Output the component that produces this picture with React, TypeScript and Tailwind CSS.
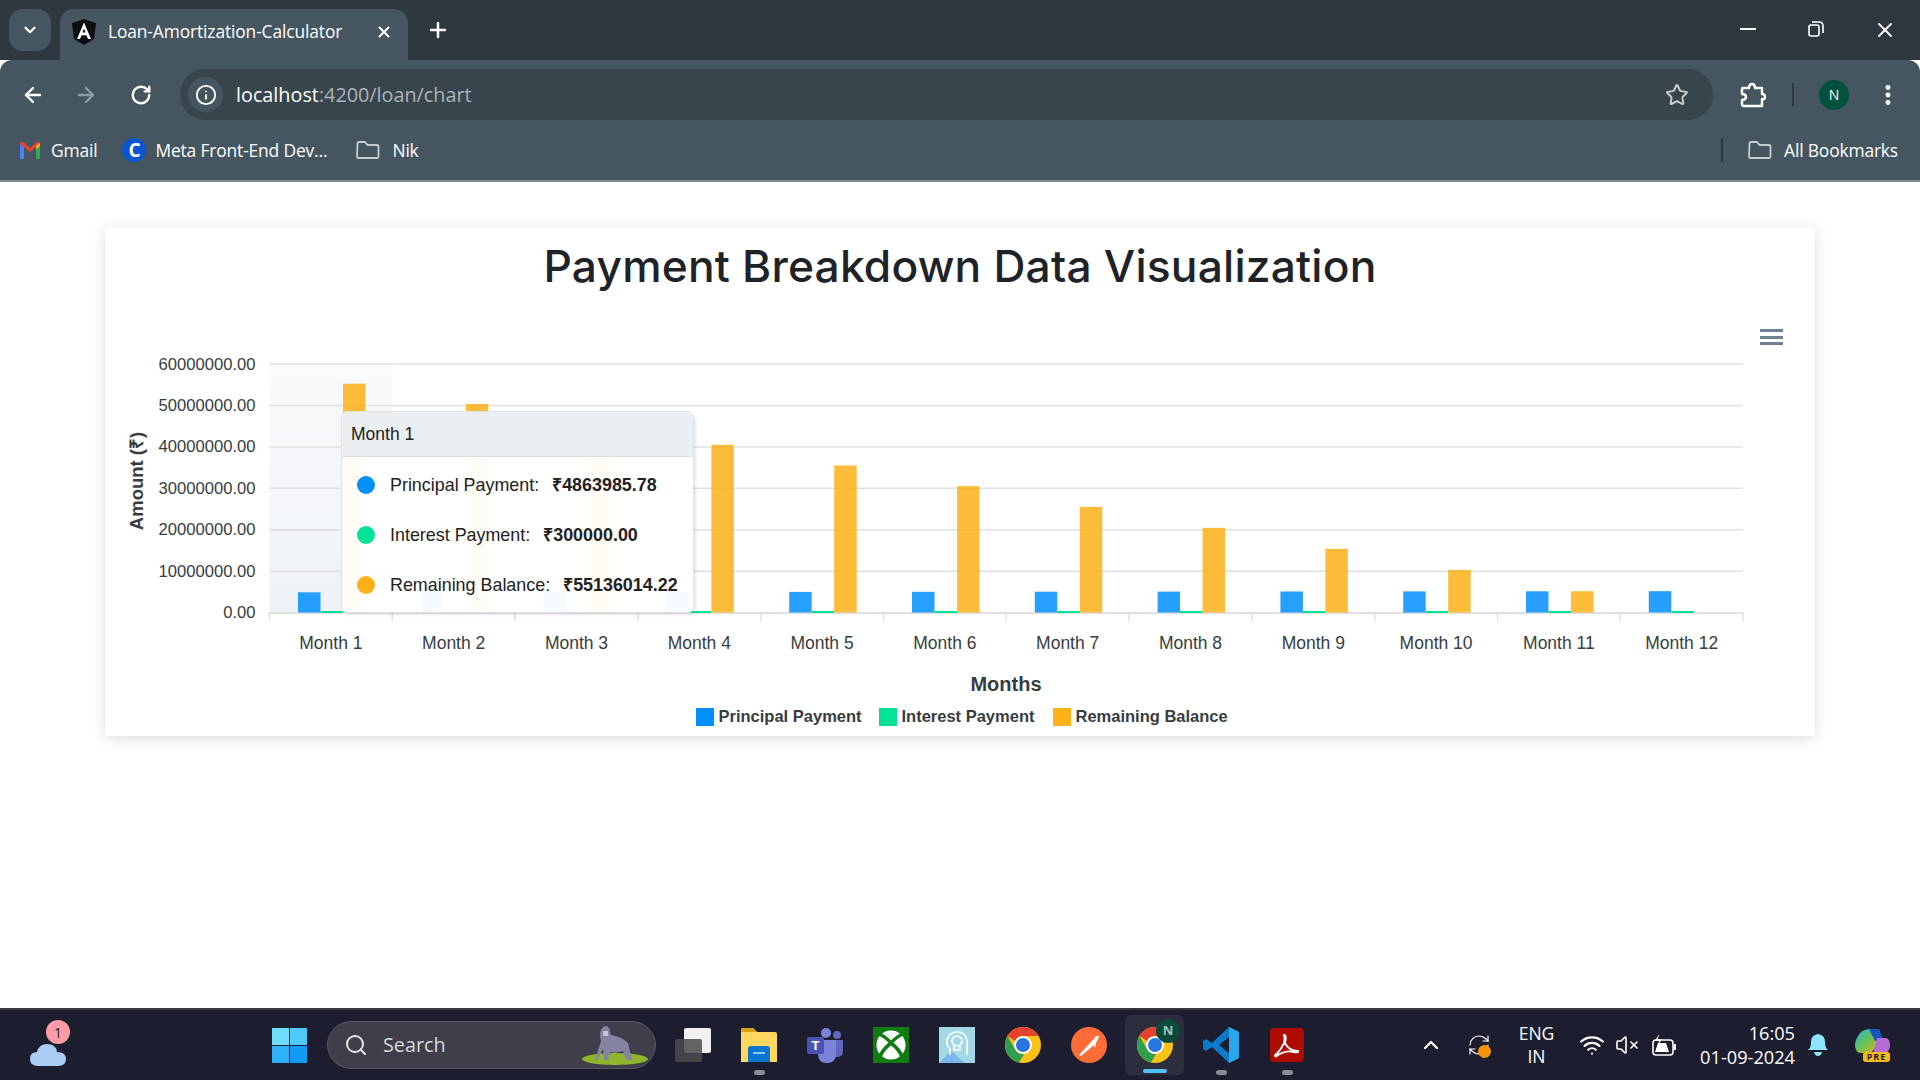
import {
  ArrowLeft,
  ArrowRight,
  ChevronDown,
  ChevronUp,
  EllipsisVertical,
  Info,
  Plus,
  RefreshCw,
  RotateCw,
  Search,
  Star,
  VolumeX,
  Wifi,
  X,
} from "lucide-react";

const months = Array.from({ length: 12 }, (_, i) => `Month ${i + 1}`);
const yLabels = ["60000000.00", "50000000.00", "40000000.00", "30000000.00", "20000000.00", "10000000.00", "0.00"];

// amortization schedule: 60M over 12 months at 0.5% a month
const schedule = (() => {
  let balance = 60000000;
  return months.map(() => {
    const interest = balance * 0.005;
    const principal = 5163985.78 - interest;
    balance = Math.max(balance - principal, 0);
    return { principal, interest, balance };
  });
})();

const FolderIcon = () => (
  <svg width="24" height="24" viewBox="0 0 24 24" fill="none" stroke="#c7ccd0" strokeWidth="1.8">
    <path d="M1.500 5.500q0-1.500 1.500-1.500h6l2.500 3h9.500q1.500 0 1.500 1.500v10q0 1.500-1.500 1.500h-18.500q-1.500 0-1.500-1.500z" />
  </svg>
);

const ChartArea = () => {
  const left = 269.5;
  const cell = 122.8;
  const base = 612.5;
  const scale = 249 / 60000000;
  return (
    <svg width="1710" height="436" viewBox="105 300 1710 436" fontFamily="'Liberation Sans', sans-serif" fill="#373d3f">
      <defs>
        <linearGradient id="cross" x1="0" y1="0" x2="0" y2="1">
          <stop offset="0" stopColor="#f9fafc" />
          <stop offset="1" stopColor="#eef2f7" />
        </linearGradient>
      </defs>
      <rect x={left} y="364" width={cell} height="248" fill="url(#cross)" />
      {yLabels.map((label, i) => {
        const y = 364 + i * 41.45;
        return (
          <g key={label}>
            {i < 6 && <line x1={left} x2="1743" y1={y} y2={y} stroke="#e0e0e0" strokeWidth="1.5" />}
            <text x="255.500" y={y + 5.5} textAnchor="end" fontSize="16.600">
              {label}
            </text>
          </g>
        );
      })}
      <line x1={left} x2="1743" y1={base + 0.5} y2={base + 0.5} stroke="#e0e0e0" strokeWidth="2" />
      {schedule.map((row, i) => {
        const x = left + i * cell + 28.5;
        return (
          <g key={i}>
            <rect x={x} y={base - row.principal * scale} width="22.500" height={row.principal * scale} fill="#008ffb" fillOpacity="0.85" />
            <rect x={x + 22.5} y={base - 1.5} width="22.500" height="2" fill="#00e396" />
            <rect x={x + 45} y={base - row.balance * scale} width="22.500" height={row.balance * scale} fill="#feb019" fillOpacity="0.85" />
            <text x={left + i * cell + cell / 2} y="648.500" textAnchor="middle" fontSize="17.500">
              {months[i]}
            </text>
          </g>
        );
      })}
      {Array.from({ length: 13 }, (_, i) => (
        <line key={i} x1={left + i * cell} x2={left + i * cell} y1={base} y2={base + 9} stroke="#e0e0e0" strokeWidth="1.5" />
      ))}
      <text transform="translate(143 481) rotate(-90)" textAnchor="middle" fontSize="18.500" fontWeight="700">
        Amount (₹)
      </text>
      <text x="1006" y="691" textAnchor="middle" fontSize="20" fontWeight="700">
        Months
      </text>
      <rect x="696" y="708" width="18" height="18" fill="#008ffb" />
      <text x="718.500" y="722" fontSize="16.500" fontWeight="700">
        Principal Payment
      </text>
      <rect x="879" y="708" width="18" height="18" fill="#00e396" />
      <text x="901.500" y="722" fontSize="16.500" fontWeight="700">
        Interest Payment
      </text>
      <rect x="1053" y="708" width="18" height="18" fill="#feb019" />
      <text x="1075.500" y="722" fontSize="16.500" fontWeight="700">
        Remaining Balance
      </text>
      <g fill="#6e8192">
        <rect x="1760" y="329" width="23" height="3" />
        <rect x="1760" y="336" width="23" height="3" />
        <rect x="1760" y="342" width="23" height="3" />
      </g>
    </svg>
  );
};

const tooltipRows = [
  { label: "Principal Payment:", value: "₹4863985.78", color: "bg-[#008ffb]" },
  { label: "Interest Payment:", value: "₹300000.00", color: "bg-[#00e396]" },
  { label: "Remaining Balance:", value: "₹55136014.22", color: "bg-[#feb019]" },
];

const Tooltip = () => (
  <div className="absolute left-[236px] top-[111px] h-[202px] w-[353px] overflow-hidden rounded-[6px] border border-[#e3e3e3] bg-white/95 font-['Liberation_Sans',sans-serif] text-[17.9px] text-[#222] shadow-[2px_2px_6px_-4px_#999]">
    <div className="flex h-[45px] items-center border-b border-[#ddd] bg-[#eceff1] pl-[9px] text-[17.5px]">Month 1</div>
    <div className="flex flex-col gap-[32px] pl-[15px] pt-[19px]">
      {tooltipRows.map((row) => (
        <div key={row.label} className="flex h-[18px] items-center">
          <span className={`mr-[15px] h-[18px] w-[18px] rounded-full ${row.color}`} />
          <span className="mr-[13px]">{row.label}</span>
          <span className="font-bold">{row.value}</span>
        </div>
      ))}
    </div>
  </div>
);

const BrowserChrome = () => (
  <div className="font-['Open_Sans',sans-serif] text-white">
    {/* tab strip */}
    <div className="flex h-[60px] bg-[#2e383e] pl-[9px]">
      <div className="mt-[9px] flex h-[42px] w-[42px] items-center justify-center rounded-[14px] bg-[#455660]">
        <ChevronDown size={18} strokeWidth={3} />
      </div>
      <div className="ml-[9px] mt-[9px] flex h-[51px] w-[348px] items-center rounded-t-[14px] bg-[#455660] pb-[6px] pl-[12px]">
        <svg width="24" height="26" viewBox="0 0 24 26">
          <path d="M12 0 24 4.300 22 20 12 26 2 20 0 4.300z" fill="#0d0e12" />
          <path d="M12 3.500 5 20h3l1.500-3.800h5L16 20h3zM10.500 13.500 12 9.500l1.500 4z" fill="#fff" />
        </svg>
        <span className="ml-[12px] w-[267px] whitespace-nowrap text-[17.35px] tracking-[-0.1px]">Loan-Amortization-Calculator</span>
        <X size={18} strokeWidth={2.5} />
      </div>
      <Plus size={24} strokeWidth={2.5} className="ml-[18px] mt-[18px]" />
      <div className="ml-auto flex pt-[18px]">
        <div className="mt-[10px] h-[2px] w-[16px] bg-white" />
        <svg width="18" height="18" viewBox="0 0 18 18" fill="none" stroke="#fff" strokeWidth="1.600" className="ml-[51px] mt-[2px]">
          <rect x="2" y="5" width="10" height="11" rx="2" />
          <path d="M5 2h7q4 0 4 4v7" />
        </svg>
        <X size={24} strokeWidth={1.8} className="ml-[48px] mr-[23px]" />
      </div>
    </div>
    {/* address bar */}
    <div className="h-[122px] rounded-t-[12px] border-b-2 border-[#7f8a91] bg-[#455660]">
      <div className="flex h-[60px] items-center pl-[21px] pt-[9px]">
        <ArrowLeft size={24} strokeWidth={2.4} />
        <ArrowRight size={24} strokeWidth={2.4} className="ml-[29px] text-[#8f9ba3]" />
        <RotateCw size={22} strokeWidth={2.6} className="ml-[32px]" />
        <div className="ml-[28px] flex h-[51px] w-[1533px] items-center rounded-full bg-[#39454c] pl-[8px] pr-[24px]">
          <div className="flex h-[35px] w-[35px] items-center justify-center rounded-full bg-[#455660]">
            <Info size={22} strokeWidth={2} />
          </div>
          <span className="ml-[13px] text-[19.8px]">
            localhost<span className="text-[#aab4ba]">:4200/loan/chart</span>
          </span>
          <Star size={24} strokeWidth={2} className="ml-auto text-[#c5cacd]" />
        </div>
        <svg width="26" height="28" viewBox="0 0 26 28" fill="none" stroke="#fff" strokeWidth="2.400" strokeLinejoin="round" className="ml-[27px]">
          <path d="M3 7h6q0-4 3-4t3 4h7v6q3 0 3 3t-3 2v7H4q-2 0-2-2v-4q4 0 4-3t-4-3V9q0-2 1-2z" />
        </svg>
        <div className="ml-[26px] h-[23px] w-[2px] bg-[#2e383e]" />
        <div className="ml-[25px] flex h-[30px] w-[30px] items-center justify-center rounded-full bg-[#00513f] text-[14px]">N</div>
        <EllipsisVertical size={26} strokeWidth={2.6} className="ml-[26px]" />
      </div>
      <div className="flex h-[60px] items-center pl-[19px] text-[17.4px] tracking-[-0.15px]">
        <svg width="22" height="18" viewBox="0 0 22 18">
          <path d="M1 18V3l4 2v13z" fill="#4285f4" />
          <path d="M17 18V5l4-2v15z" fill="#34a853" />
          <path d="M1 3q0-3 3-2l7 6 7-6q3-1 3 2l-4 3-6 5-6-5z" fill="#ea4335" />
          <path d="M17 5l4-3v3l-4 3z" fill="#fbbc04" />
        </svg>
        <span className="ml-[10px]">Gmail</span>
        <div className="ml-[25px] flex h-[24px] w-[24px] items-center justify-center rounded-full bg-[#0a56d2] text-[19px] font-bold">C</div>
        <span className="ml-[9px] w-[176px] whitespace-nowrap">Meta Front-End Dev...</span>
        <div className="ml-[25px]">
          <FolderIcon />
        </div>
        <span className="ml-[12px]">Nik</span>
        <div className="ml-auto h-[24px] w-[2px] bg-[#2e383e]" />
        <div className="ml-[25px]">
          <FolderIcon />
        </div>
        <span className="ml-[12px] mr-[22px]">All Bookmarks</span>
      </div>
    </div>
  </div>
);

const dot = "h-[5px] w-[11px] rounded-full bg-[#8a8c94]";

const ChromeLogo = () => (
  <svg width="36" height="36" viewBox="0 0 36 36">
    <circle cx="18" cy="18" r="18" fill="#fbc116" />
    <path d="M18 0a18 18 0 0 1 15.600 9H18a9 9 0 0 0-8 5L2.500 9A18 18 0 0 1 18 0z" fill="#e5432f" />
    <path d="M2.500 9 10 22a9 9 0 0 0 9 5l-5 8.500A18 18 0 0 1 2.500 9z" fill="#2f9e4f" />
    <circle cx="18" cy="18" r="9" fill="#fff" />
    <circle cx="18" cy="18" r="7" fill="#2a74e0" />
  </svg>
);

const TaskIcon = ({ children, indicator }: { children: React.ReactNode; indicator?: boolean }) => (
  <div className="relative flex h-[36px] w-[36px] items-center justify-center">
    {children}
    {indicator && <div className={`absolute left-[13px] top-[43px] ${dot}`} />}
  </div>
);

const Taskbar = () => (
  <div className="flex h-[72px] items-center border-t-2 border-[#35363f] bg-[#1c1e2f] font-['Open_Sans',sans-serif] text-white">
    {/* weather */}
    <div className="relative ml-[30px] h-[36px] w-[36px]">
      <svg width="36" height="26" viewBox="0 0 36 26" className="absolute top-[13px]">
        <path d="M8 26q-8 0-8-7t7-7q2-8 10-8 9 0 10 8 9 0 9 7t-8 7z" fill="#a9cdf4" />
      </svg>
      <div className="absolute left-[16px] top-[-7px] flex h-[24px] w-[24px] items-center justify-center rounded-full bg-[#ff9ca5] text-[14px] text-[#222]">1</div>
    </div>
    <svg width="35" height="35" viewBox="0 0 35 35" className="ml-[206px]">
      <rect width="17" height="17" fill="#6fdcfb" />
      <rect x="18" width="17" height="17" fill="#4fc8fa" />
      <rect y="18" width="17" height="17" fill="#2db0f7" />
      <rect x="18" y="18" width="17" height="17" fill="#129bf5" />
    </svg>
    <div className="ml-[20px] flex h-[48px] w-[329px] items-center rounded-full border border-[#565662] bg-[#3f3f4c] pl-[16px] pr-[6px]">
      <Search size={24} strokeWidth={2} className="text-[#e6e6e6]" />
      <span className="ml-[15px] text-[19.8px] text-[#d8d8dc]">Search</span>
      <svg width="67" height="40" viewBox="0 0 67 40" className="ml-auto">
        <ellipse cx="33" cy="34" rx="33" ry="6" fill="#8fb52c" />
        <path d="M13 35 19 16q-2-6 0-11 2-4 5-4 4 1 4 6l1 3q11 2 17 8l4 17h-6l-3-9q-7 3-13 1l-2 8h-4l-1-11-6 11z" fill="#8484a2" />
        <path d="M21 6h5v5h-5z" fill="#c2c2d2" />
      </svg>
    </div>
    <div className="ml-[19px] flex gap-[30px]">
      <TaskIcon>
        <svg width="36" height="34" viewBox="0 0 36 34">
          <rect x="9" width="27" height="25" rx="2" fill="#f1f1f1" />
          <rect y="11" width="27" height="23" rx="2" fill="#4a4a4c" fillOpacity="0.85" />
        </svg>
      </TaskIcon>
      <TaskIcon indicator>
        <svg width="36" height="34" viewBox="0 0 36 34">
          <path d="M0 2q0-2 2-2h10l4 4h18q2 0 2 2v28H0z" fill="#ffd75e" />
          <path d="M0 2q0-2 2-2h10l3 4H0z" fill="#d9a010" />
          <path d="M7 34V21q0-3 3-3h16q3 0 3 3v13z" fill="#0a76d0" />
          <rect x="12" y="24" width="12" height="2" fill="#8cc8f5" />
        </svg>
      </TaskIcon>
      <TaskIcon>
        <svg width="36" height="36" viewBox="0 0 36 36">
          <circle cx="19" cy="6" r="5" fill="#7b83d9" />
          <circle cx="30" cy="8" r="4" fill="#5f67bd" />
          <path d="M24 13h12v11q0 6-6 6t-6-6z" fill="#5f67bd" />
          <path d="M11 13h18v14q0 9-9 9t-9-9z" fill="#7b83d9" />
          <rect y="10" width="17" height="17" rx="2" fill="#4a52b5" />
          <text x="8.500" y="23" textAnchor="middle" fontSize="13" fontWeight="700" fill="#fff" fontFamily="'Liberation Sans', sans-serif">T</text>
        </svg>
      </TaskIcon>
      <TaskIcon>
        <svg width="36" height="36" viewBox="0 0 36 36" fill="none">
          <rect width="36" height="36" fill="#107c10" />
          <circle cx="18" cy="18" r="14.500" fill="#fff" />
          <path d="M6 7Q13 10 18 16 23 10 30 7M18 16Q9 23 7 30M18 16Q27 23 29 30" stroke="#107c10" strokeWidth="3.500" />
        </svg>
      </TaskIcon>
      <TaskIcon>
        <svg width="36" height="36" viewBox="0 0 36 36" fill="none">
          <rect width="36" height="36" fill="#a4d8e4" />
          <path d="M0 36 12 24l14 12z" fill="#7cb6ee" />
          <path d="M11 28v-6q-4-4-3-9 2-8 10-8 9 0 10 9v14" stroke="#fff" strokeWidth="1.600" />
          <circle cx="18" cy="14" r="5" stroke="#fff" strokeWidth="1.600" />
          <path d="M15 19v4h6v-4" stroke="#fff" strokeWidth="1.600" />
        </svg>
      </TaskIcon>
      <TaskIcon>
        <ChromeLogo />
      </TaskIcon>
      <TaskIcon>
        <svg width="36" height="36" viewBox="0 0 36 36">
          <circle cx="18" cy="18" r="18" fill="#ff6c37" />
          <path d="M8 28 20 15l3 3-13 11zM20 15l5-6q2-1 3 1l-3 6-1 5-1-3z" fill="#fff" />
        </svg>
      </TaskIcon>
    </div>
    <div className="relative ml-[18px] flex h-[60px] w-[59px] items-center justify-center rounded-[6px] bg-[#2c2e3e]">
      <ChromeLogo />
      <div className="absolute left-[31px] top-[4px] flex h-[24px] w-[24px] items-center justify-center rounded-full bg-[#084a3c] text-[13px] font-bold text-[#a5c5bb]">N</div>
      <div className="absolute left-[18px] top-[54px] h-[4px] w-[24px] rounded-full bg-[#4cc2ff]" />
    </div>
    <div className="ml-[19px] flex gap-[30px]">
      <TaskIcon indicator>
        <svg width="36" height="36" viewBox="0 0 36 36">
          <path d="M26 0 36 5v26l-10 5L9 20l-6 4-3-2v-8l3-2 6 4z" fill="#0b7ac7" />
          <path d="M26 0 36 5v26l-10 5z" fill="#28a8ea" />
          <path d="M26 10v16l-10-8z" fill="#1c1e2f" />
        </svg>
      </TaskIcon>
      <TaskIcon indicator>
        <svg width="34" height="34" viewBox="0 0 34 34" fill="none">
          <rect width="34" height="34" rx="4" fill="#ae0c00" />
          <path d="M5 27q4-2 9-12 1-5 0-8 3 0 1 8 4 8 13 8 1 2-5 1-6-2-15 3-3 3-3 0z" stroke="#fff" strokeWidth="1.800" />
        </svg>
      </TaskIcon>
    </div>
    {/* tray */}
    <ChevronUp size={24} strokeWidth={2.2} className="ml-[114px]" />
    <div className="relative ml-[24px] h-[24px] w-[24px]">
      <RefreshCw size={24} strokeWidth={1.2} />
      <div className="absolute left-[11px] top-[12px] h-[13px] w-[13px] rounded-full bg-[#f7950a]" />
    </div>
    <div className="ml-[27px] w-[37px] text-center text-[17.5px] leading-[23px]">
      ENG
      <br />
      IN
    </div>
    <Wifi size={26} strokeWidth={2} className="ml-[24px]" />
    <VolumeX size={24} strokeWidth={1.6} className="ml-[10px]" />
    <svg width="24" height="24" viewBox="0 0 24 24" fill="none" stroke="#fff" strokeWidth="1.600" className="ml-[13px]">
      <rect x="1" y="7" width="20" height="15" rx="3" />
      <rect x="22" y="11" width="2" height="6" fill="#fff" stroke="none" />
      <path d="M3 19 6 10h8l3 9z" fill="#fff" stroke="none" />
      <path d="M7 1 3 8h4l-1 4 4-6H6z" fill="#fff" stroke="none" />
    </svg>
    <div className="ml-[10px] w-[109px] whitespace-nowrap text-right text-[18.2px] leading-[24px]">
      16:05
      <br />
      01-09-2024
    </div>
    <svg width="20" height="22" viewBox="0 0 20 22" className="ml-[13px]">
      <path d="M0 16q3-2 3-8 0-7 7-8 7 1 7 8 0 6 3 8z" fill="#8fe4ff" />
      <path d="M6 18h8q-1 4-4 4t-4-4z" fill="#8fe4ff" />
    </svg>
    <div className="relative ml-[27px] h-[34px] w-[35px]">
      <svg width="35" height="30" viewBox="0 0 35 30">
        <defs>
          <linearGradient id="copilot" x1="0" y1="0" x2="1" y2="1">
            <stop offset="0" stopColor="#1bb6e8" />
            <stop offset="0.5" stopColor="#70c24d" />
            <stop offset="1" stopColor="#f3b12d" />
          </linearGradient>
        </defs>
        <path d="M0 16Q3 2 14 1h10l3 10-11 14H4q-4-2-4-9z" fill="url(#copilot)" />
        <path d="M14 1h10l4 12h-8z" fill="#1653c4" />
        <path d="M22 10h9q4 1 4 7t-5 9H18z" fill="#b76ad8" />
      </svg>
      <div className="absolute left-[8px] top-[24px] flex h-[10px] w-[27px] items-center justify-center rounded-[3px] bg-[#fbb80f] text-[9px] font-bold tracking-[1px] text-[#1c1e2f]">PRE</div>
    </div>
  </div>
);

export default function App() {
  return (
    <div className="flex h-[1080px] w-[1920px] flex-col overflow-hidden bg-white">
      <BrowserChrome />
      <main className="flex-1 pl-[105px] pt-[45px]">
        <div className="w-[1710px] bg-white shadow-[0_2px_14px_rgba(0,0,0,0.14)]">
          <h1 className="h-[73px] whitespace-nowrap pt-[14px] text-center font-['Inter',sans-serif] text-[44.3px] font-medium leading-[50px] tracking-[0.2px] text-[#1f2328]">
            Payment Breakdown Data Visualization
          </h1>
          <div className="relative h-[436px]">
            <ChartArea />
            <Tooltip />
          </div>
        </div>
      </main>
      <Taskbar />
    </div>
  );
}
